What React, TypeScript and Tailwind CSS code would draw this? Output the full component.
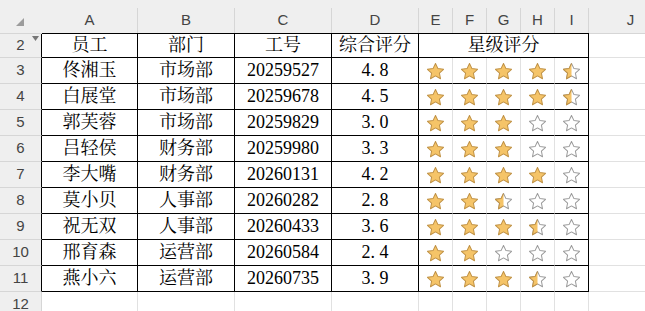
import { useId } from "react";

const cellFont = { fontFamily: '"Liberation Serif", "Noto Serif CJK SC", "Noto Sans CJK SC", serif' };
const headFont = { fontFamily: '"Liberation Sans", Arial, sans-serif' };

const rows = [
  { n: 3, name: "佟湘玉", dept: "市场部", no: "20259527", score: 4.8 },
  { n: 4, name: "白展堂", dept: "市场部", no: "20259678", score: 4.5 },
  { n: 5, name: "郭芙蓉", dept: "市场部", no: "20259829", score: 3.0 },
  { n: 6, name: "吕轻侯", dept: "财务部", no: "20259980", score: 3.3 },
  { n: 7, name: "李大嘴", dept: "财务部", no: "20260131", score: 4.2 },
  { n: 8, name: "莫小贝", dept: "人事部", no: "20260282", score: 2.8 },
  { n: 9, name: "祝无双", dept: "人事部", no: "20260433", score: 3.6 },
  { n: 10, name: "邢育森", dept: "运营部", no: "20260584", score: 2.4 },
  { n: 11, name: "燕小六", dept: "运营部", no: "20260735", score: 3.9 },
];

const STAR = "12,2.5 14.9,8.6 21.5,9.4 16.6,13.9 17.9,20.5 12,17.2 6.1,20.5 7.4,13.9 2.5,9.4 9.1,8.6";

function Star({ kind }: { kind: number }) {
  const id = useId();
  return (
    <svg width="17" height="17" viewBox="2 2 20 20" className="mt-[2px]">
      <defs>
        <clipPath id={id}>
          <rect x="0" y="0" width="12" height="24" />
        </clipPath>
      </defs>
      {kind === 2 ? (
        <polygon points={STAR} fill="#f5c468" stroke="#c09246" strokeWidth="1.2" strokeLinejoin="round" />
      ) : (
        <>
          <polygon points={STAR} fill="#ffffff" stroke="#9b9b9b" strokeWidth="1.2" strokeLinejoin="round" />
          {kind === 1 && (
            <polygon points={STAR} fill="#f5c468" stroke="#c09246" strokeWidth="1.2" strokeLinejoin="round" clipPath={`url(#${id})`} />
          )}
        </>
      )}
    </svg>
  );
}

function starsFor(score: number) {
  const full = Math.floor(score + 1e-9);
  const half = score - full >= 0.5 ? 1 : 0;
  return [0, 1, 2, 3, 4].map((i) => (i < full ? 2 : i === full && half ? 1 : 0));
}

function ColHead({ w, label, dark }: { w: string; label: string; dark: boolean }) {
  return (
    <div className={`${w} h-full flex flex-col border-b ${dark ? "border-black" : "border-[#d6d6d6]"}`}>
      <div className="h-[8px]" />
      <div className="flex-1 flex items-center justify-center border-r border-[#d6d6d6] text-[15px] text-[#444]">
        {label}
      </div>
    </div>
  );
}

export default function App() {
  return (
    <div className="w-[645px] h-[311px] overflow-hidden bg-white">
      <div className="w-[760px]">
        {/* column letters */}
        <div className="flex h-[34px] bg-[#efefef]" style={headFont}>
          <div className="w-[42px] h-full relative border-b border-[#d6d6d6]">
            <svg className="absolute left-[16px] top-[18px]" width="8" height="8" viewBox="0 0 8 8">
              <polygon points="8,0 8,8 0,8" fill="#9c9c9c" />
            </svg>
          </div>
          <ColHead w="w-[96px]" label="A" dark />
          <ColHead w="w-[97px]" label="B" dark />
          <ColHead w="w-[97px]" label="C" dark />
          <ColHead w="w-[87px]" label="D" dark />
          <ColHead w="w-[34px]" label="E" dark />
          <ColHead w="w-[34px]" label="F" dark />
          <ColHead w="w-[34px]" label="G" dark />
          <ColHead w="w-[34px]" label="H" dark />
          <ColHead w="w-[34px]" label="I" dark />
          <ColHead w="w-[84px]" label="J" dark={false} />
        </div>

        {/* row 2 - table header */}
        <div className="flex h-[24px] text-[18px] text-black" style={cellFont}>
          <div className="w-[42px] relative bg-[#efefef] border-b border-r border-b-[#d6d6d6] border-r-black flex items-center justify-center text-[15px] text-[#444]" style={headFont}>
            2
            <svg className="absolute left-[32px] top-[2px]" width="7" height="5" viewBox="0 0 7 5">
              <polygon points="0,0 7,0 3.5,5" fill="#777" />
            </svg>
          </div>
          <div className="w-[96px] flex items-center justify-center border-r border-b border-black">员工</div>
          <div className="w-[97px] flex items-center justify-center border-r border-b border-black">部门</div>
          <div className="w-[97px] flex items-center justify-center border-r border-b border-black">工号</div>
          <div className="w-[87px] flex items-center justify-center border-r border-b border-black">综合评分</div>
          <div className="w-[170px] flex items-center justify-center border-r border-b border-black">星级评分</div>
          <div className="w-[84px] border-r border-b border-[#e1e1e1]" />
        </div>

        {rows.map((r) => (
          <div key={r.n} className="flex h-[26px] text-[18px] text-black" style={cellFont}>
            <div className="w-[42px] bg-[#efefef] border-b border-r border-b-[#d6d6d6] border-r-black flex items-center justify-center text-[15px] text-[#444]" style={headFont}>
              {r.n}
            </div>
            <div className="w-[96px] flex items-center justify-center border-r border-b border-black">{r.name}</div>
            <div className="w-[97px] flex items-center justify-center border-r border-b border-black">{r.dept}</div>
            <div className="w-[97px] flex items-center justify-center border-r border-b border-black">{r.no}</div>
            <div className="w-[87px] flex items-center justify-center border-r border-b border-black">
              {r.score.toFixed(1).replace(".", ". ")}
            </div>
            {starsFor(r.score).map((k, i) => (
              <div
                key={i}
                className={`w-[34px] flex items-center justify-center border-r border-b border-b-black ${i === 4 ? "border-r-black" : "border-r-[#e1e1e1]"}`}
              >
                <Star kind={k} />
              </div>
            ))}
            <div className="w-[84px] border-r border-b border-[#e1e1e1]" />
          </div>
        ))}

        {/* row 12 */}
        <div className="flex h-[26px]">
          <div className="w-[42px] bg-[#efefef] border-r border-b border-[#d6d6d6] flex items-center justify-center text-[15px] text-[#444]" style={headFont}>
            12
          </div>
          <div className="w-[96px] border-r border-b border-[#e1e1e1]" />
          <div className="w-[97px] border-r border-b border-[#e1e1e1]" />
          <div className="w-[97px] border-r border-b border-[#e1e1e1]" />
          <div className="w-[87px] border-r border-b border-[#e1e1e1]" />
          <div className="w-[34px] border-r border-b border-[#e1e1e1]" />
          <div className="w-[34px] border-r border-b border-[#e1e1e1]" />
          <div className="w-[34px] border-r border-b border-[#e1e1e1]" />
          <div className="w-[34px] border-r border-b border-[#e1e1e1]" />
          <div className="w-[34px] border-r border-b border-[#e1e1e1]" />
          <div className="w-[84px] border-r border-b border-[#e1e1e1]" />
        </div>
      </div>
    </div>
  );
}
